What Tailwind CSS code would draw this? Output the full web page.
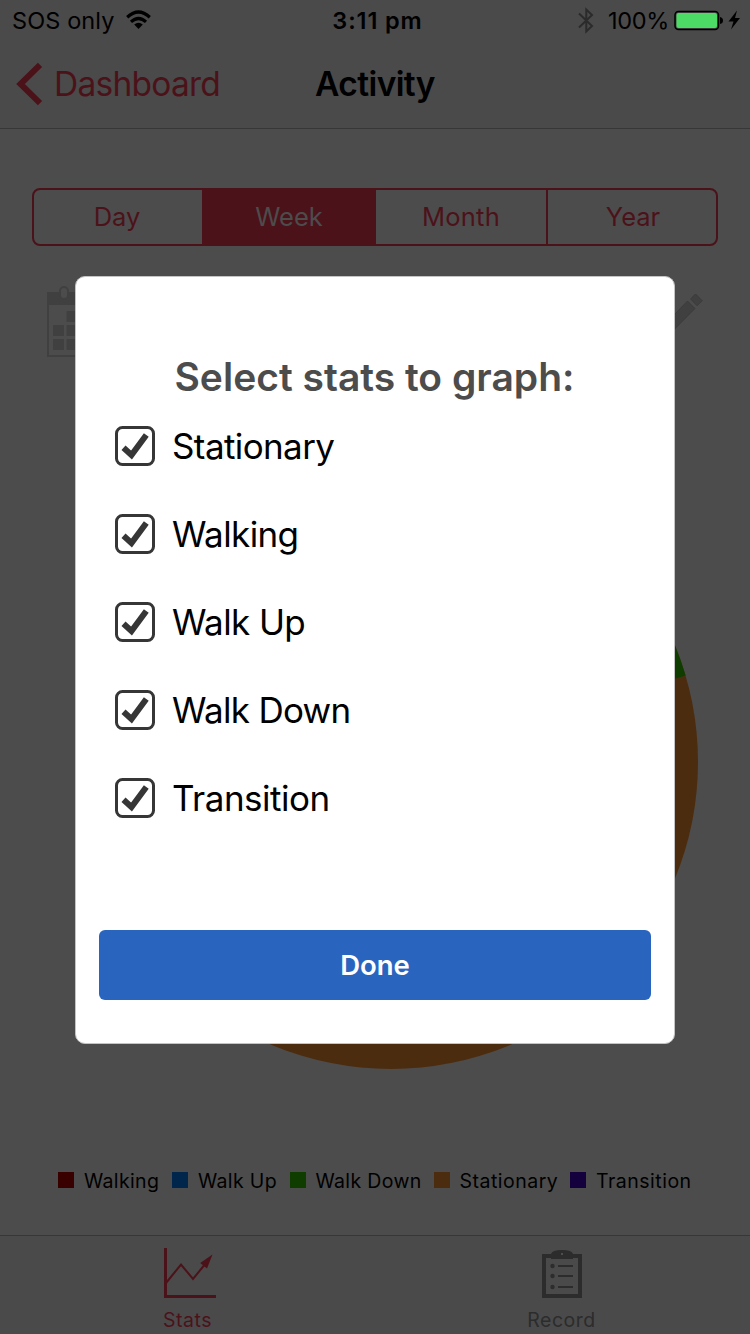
<!DOCTYPE html>
<html lang="en">
<head>
<meta charset="utf-8">
<title>Activity</title>
<script src="https://cdn.jsdelivr.net/npm/@tailwindcss/browser@4"></script>
</head>
<body class="bg-[#4c4c4c]">
<div class="relative flex h-[1334px] w-[750px] flex-col overflow-hidden bg-[#4c4c4c] font-['Inter','Liberation_Sans',sans-serif] text-black whitespace-nowrap">
  <header class="h-[129px] shrink-0 border-b border-[#373737] bg-[#4a4a4a]">
    <div class="grid h-10 grid-cols-3 text-[23.500px] leading-[42px]">
      <div class="flex pl-3">
        <span class="w-[114px] tracking-[0.1px]">SOS only</span>
        <svg class="mt-[10px] h-[20px] w-[25px]" viewBox="0 0 25 20" fill="none" stroke="#000" stroke-width="3.2"><path d="M1.2 7.2Q12.5-3.2 23.8 7.2"/><path d="M5 11.900Q12.5 5.1 20 11.900"/><path d="M12.5 19 8.2 14.6Q12.5 11 16.8 14.6Z" fill="#000" stroke="none"/></svg>
      </div>
      <div class="text-center font-semibold tracking-[0.9px]"><span class="ml-[5px]">3:11 pm</span></div>
      <div class="flex justify-end pr-[9px]">
        <svg class="mt-[7px] h-[27px] w-[16px]" viewBox="0 0 16 27" fill="none" stroke="#2b2b2b" stroke-width="2"><path d="M1 6.5 14 19 8.3 24.500V2.500L14 8 1 20.500"/></svg>
        <span class="ml-[14px] w-[66px] tracking-[-0.3px]">100%</span>
        <svg class="mt-[11px] h-[19px] w-[67px] overflow-visible" viewBox="0 0 67 19"><rect x="1" y=".5" width="43.500" height="18" rx="3.500" fill="none" stroke="#000" stroke-width="1.500"/><rect x="2.500" y="2" width="40.500" height="15" rx="2" fill="#4cdb64"/><path d="M46 6Q49 6.500 49 9.500T46 13Z"/><path d="M63-.5 54.500 10.500h5L57 18.500 66 7h-5Z"/></svg>
      </div>
    </div>
    <div class="grid h-[88px] grid-cols-3 text-[33.500px] leading-[89px]">
      <div class="flex pl-[16px] text-[#4c121a]">
        <svg class="mt-[22px] h-[44px] w-[27px]" viewBox="0 0 27 44" fill="none" stroke="currentColor" stroke-width="6"><path d="M24 2.800 4.500 22 24 41.200"/></svg>
        <span class="ml-[11px] tracking-[-0.75px]">Dashboard</span>
      </div>
      <h1 class="text-center font-semibold tracking-[-0.6px]">Activity</h1>
    </div>
  </header>

  <main class="relative h-[1106px] shrink-0">
    <div class="px-8 pt-[59px]">
      <div class="grid h-[58px] grid-cols-[168px_174px_172px_168px] overflow-hidden rounded-lg border-2 border-[#4c121a] text-center text-[25.500px] leading-[53px] text-[#4c121a]">
        <div class="pr-[2px]">Day</div>
        <div class="bg-[#4c121a] text-[#4c4c4c]">Week</div>
        <div class="border-r-2 border-[#4c121a] tracking-[0.2px]">Month</div>
        <div class="pl-[2px]">Year</div>
      </div>
    </div>
    <div class="flex justify-between pt-[40px] pr-[47px] pl-[47px]">
      <svg class="h-[72px] w-[66px]" viewBox="0 0 66 72" fill="#404040"><path fill-rule="evenodd" d="M0 6h66v65H0ZM2 19v50h62V19Z"/><rect x="13" y="1" width="8" height="12" rx="4" fill="#4c4c4c" stroke="#404040" stroke-width="2"/><path d="M19.500 25h11v11h-11ZM6 39h11v11H6ZM19.500 39h11v11h-11ZM6 53h11v11H6ZM19.500 53h11v11h-11Z"/></svg>
      <svg class="mt-2 h-[64px] w-[64px]" viewBox="0 0 64 64" fill="#404040" stroke="#383838" stroke-width=".7"><path d="m56.500 -.2 6.800 7-5.300 5L51.500 5ZM48.500 7 56 14.500 14 57l-10 3 3-10Z"/></svg>
    </div>
    <svg class="absolute top-[326px] left-[84px] h-[614px] w-[614px]" viewBox="-307 -307 614 614"><circle r="307" fill="#4c2c0f"/><path d="M0 0 294.600-86.400A307 307 0 0 0 240-191Z" fill="#0f3d00"/></svg>
    <div class="absolute inset-x-0 top-[1040px] flex h-6 items-center pl-[58px] text-[19.500px] leading-6 tracking-[0.35px]">
      <i class="mb-[2px] size-4 bg-[#390000]"></i><span class="ml-[10px] w-[88px]">Walking</span>
      <i class="mb-[2px] size-4 bg-[#00264c]"></i><span class="ml-[10px] w-[91.500px]">Walk Up</span>
      <i class="mb-[2px] size-4 bg-[#0f3d00]"></i><span class="ml-[10px] w-[118px]">Walk Down</span>
      <i class="mb-[2px] size-4 bg-[#4c2c0f]"></i><span class="ml-[10px] w-[110.500px] tracking-[0.5px]">Stationary</span>
      <i class="mb-[2px] size-4 bg-[#13003d]"></i><span class="ml-[10px] tracking-[0.5px]">Transition</span>
    </div>
  </main>

  <nav class="grid h-[99px] shrink-0 grid-cols-2 border-t border-[#373737] bg-[#4a4a4a] text-[19.500px] leading-6 tracking-[0.5px]">
    <div class="flex flex-col items-center text-[#4c121a]">
      <svg class="mt-3 ml-[5px] h-[51px] w-[53px]" viewBox="0 0 53 51" fill="none" stroke="currentColor"><path d="M1.500 0V48.500H52" stroke-width="3"/><path d="m2 35 15-18.500 12 14.500 13-16" stroke-width="2"/><path d="m48.500 6.500-12.300 8.500 6.800 5.500Z" fill="currentColor" stroke="none"/></svg>
      <span class="mt-[9px]">Stats</span>
    </div>
    <div class="flex flex-col items-center pr-[2px] text-[#2c2c2c]">
      <svg class="mt-[14px] h-[49px] w-[40px]" viewBox="0 0 40 49" fill="currentColor"><path fill-rule="evenodd" d="M0 4h9Q10 0 20 0t11 4h9v44H0ZM4 8v36h32V8h-5v1H9V8Z"/><circle cx="20" cy="4" r="1" fill="#5a5a5a"/><circle cx="10.500" cy="16" r="2.200"/><circle cx="10.500" cy="26" r="2.200"/><circle cx="10.500" cy="37" r="2.200"/><path d="M16 15h15v2H16ZM16 25h15v2H16ZM16 36h15v2H16Z"/></svg>
      <span class="mt-[9px]">Record</span>
    </div>
  </nav>

  <section role="dialog" class="absolute top-[276px] left-[75px] flex h-[768px] w-[600px] flex-col rounded-[10px] border border-[#c4c4c4] bg-white px-[23px]">
    <h2 class="mt-[75px] h-[51px] pr-px text-center text-[39px] leading-[49px] font-semibold text-[#4c4c4c]">Select stats to graph:</h2>
    <ul id="stats" class="mt-[21px] flex flex-col text-[35px] leading-[44px]"></ul>
    <button class="mt-auto mb-[43px] h-[70px] rounded-md bg-[#2965bf] pt-[2px] text-[27.500px] font-semibold text-white">Done</button>
  </section>
</div>
<template id="row">
  <li class="flex h-[88px] items-start pl-4"><svg class="mt-[2px] size-[40px]" viewBox="0 0 40 40"><rect x="1.500" y="1.500" width="37" height="37" rx="6" fill="none" stroke="#363636" stroke-width="3"/><path d="m8.500 21.700 8 7.300L31.300 9" fill="none" stroke="#363636" stroke-width="6"/></svg><span class="ml-[17px]"></span></li>
</template>
<script>
for (const [label, spacing] of [['Stationary', -0.6], ['Walking', -0.6], ['Walk Up', -0.6], ['Walk Down', -0.7], ['Transition', -0.5]]) {
  const row = document.getElementById('row').content.cloneNode(true);
  const text = row.querySelector('span');
  text.textContent = label;
  text.style.letterSpacing = spacing + 'px';
  document.getElementById('stats').append(row);
}
</script>
</body>
</html>
